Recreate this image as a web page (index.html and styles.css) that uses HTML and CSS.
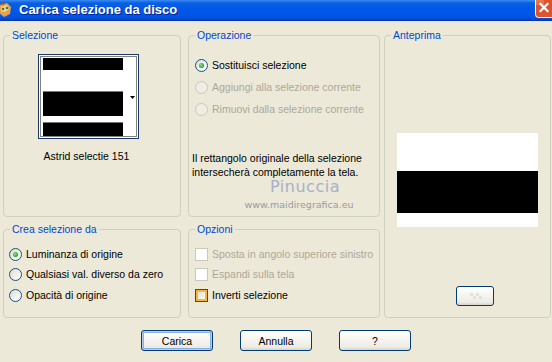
FILE: index.html
```html
<!DOCTYPE html>
<html lang="it">
<head>
    <meta charset="UTF-8">
    <title>Carica selezione da disco</title>
    <link rel="stylesheet" href="styles.css">
</head>
<body>
    <div class="window">
        <div class="titlebar">
            <svg class="app-icon" width="16" height="18" viewBox="0 0 16 18">
                <path d="M2 4 L9 2 L13 6 L12 13 L6 16 L1 12 Z" fill="#e8a24a"/>
                <path d="M3 6 L9 4 L11 8 L7 11 L3 10 Z" fill="#f7d39a"/>
                <circle cx="5" cy="8" r="1.3" fill="#2f8a2f"/>
                <circle cx="9" cy="7" r="1.3" fill="#2f8a2f"/>
                <path d="M1 3 L5 1 L6 4 Z" fill="#c24a1a"/>
            </svg>
            <span class="title">Carica selezione da disco</span>
            <svg class="close-btn" width="17" height="19" viewBox="0 0 17 19">
                <rect x="0.5" y="-4" width="22" height="21.5" rx="3" fill="#dd532d" stroke="#ffffff" stroke-width="1"/>
                <rect x="1" y="-3" width="8" height="8" fill="#ec8a66" opacity="0.6"/>
                <path d="M5.5 4 L12.5 11 M12.5 4 L5.5 11" stroke="#ffffff" stroke-width="2.2" stroke-linecap="square"/>
            </svg>
        </div>

        <div class="content">
            <div class="panels">
                <fieldset class="group group-sel">
                    <legend>Selezione</legend>
                    <div class="thumb-col">
                        <div class="thumb">
                            <svg width="99" height="83" viewBox="0 0 99 83">
                                <rect x="0" y="0" width="99" height="83" fill="#fff"/>
                                <rect x="4" y="3" width="80" height="12" fill="#000"/>
                                <rect x="4" y="36" width="80" height="1" fill="#777"/>
                                <rect x="4" y="37" width="80" height="24" fill="#000"/>
                                <rect x="4" y="67" width="80" height="1" fill="#777"/>
                                <rect x="4" y="68" width="80" height="13" fill="#000"/>
                                <rect x="1.5" y="1.5" width="96" height="80" fill="none" stroke="#000" stroke-width="1" stroke-dasharray="1 1"/>
                                <path d="M91 41 L96 41 L93.5 44 Z" fill="#000"/>
                            </svg>
                        </div>
                        <div class="caption">Astrid selectie 151</div>
                    </div>
                </fieldset>

                <fieldset class="group group-op">
                    <legend>Operazione</legend>
                    <div class="options">
                        <label class="opt"><span class="radio checked"></span>Sostituisci selezione</label>
                        <label class="opt disabled"><span class="radio"></span>Aggiungi alla selezione corrente</label>
                        <label class="opt disabled"><span class="radio"></span>Rimuovi dalla selezione corrente</label>
                    </div>
                    <p class="info">Il rettangolo originale della selezione intersecherà completamente la tela.</p>
                    <div class="watermark">
                        <span class="wm-name">Pinuccia</span>
                        <span class="wm-url">www.maidiregrafica.eu</span>
                    </div>
                </fieldset>

                <fieldset class="group group-prev">
                    <legend>Anteprima</legend>
                    <div class="preview">
                        <div class="band white top"></div>
                        <div class="band black"></div>
                        <div class="band white bottom"></div>
                    </div>
                    <button class="btn btn-small">
                        <svg width="14" height="10" viewBox="0 0 14 10">
                            <rect x="2" y="2" width="3" height="3" fill="#e4e2da"/>
                            <rect x="8" y="2" width="3" height="3" fill="#e4e2da"/>
                            <rect x="5" y="5" width="3" height="3" fill="#e4e2da"/>
                            <rect x="11" y="5" width="3" height="3" fill="#e4e2da"/>
                        </svg>
                    </button>
                </fieldset>

                <fieldset class="group group-crea">
                    <legend>Crea selezione da</legend>
                    <div class="options">
                        <label class="opt"><span class="radio checked"></span>Luminanza di origine</label>
                        <label class="opt"><span class="radio"></span>Qualsiasi val. diverso da zero</label>
                        <label class="opt"><span class="radio"></span>Opacità di origine</label>
                    </div>
                </fieldset>

                <fieldset class="group group-opz">
                    <legend>Opzioni</legend>
                    <div class="options">
                        <label class="opt disabled"><span class="check"></span>Sposta in angolo superiore sinistro</label>
                        <label class="opt disabled"><span class="check"></span>Espandi sulla tela</label>
                        <label class="opt"><span class="check hover"></span>Inverti selezione</label>
                    </div>
                </fieldset>
            </div>

            <div class="buttons">
                <button class="btn btn-default">Carica</button>
                <button class="btn">Annulla</button>
                <button class="btn">?</button>
            </div>
        </div>
    </div>
</body>
</html>
```

FILE: styles.css
```css
* { margin: 0; padding: 0; box-sizing: border-box; }
body {
    font-family: "Liberation Sans", Arial, sans-serif;
    font-size: 10.5px;
    color: #000;
    background: #ECE9D8;
}
.window {
    width: 552px;
    height: 362px;
    background: #ECE9D8;
    overflow: hidden;
}
.titlebar {
    height: 21px;
    display: flex;
    align-items: flex-start;
    background: linear-gradient(#3a8cf4 0%, #0a5fe0 15%, #0058ea 45%, #0055e2 85%, #0040c8 100%);
    border-bottom: 1px solid #0036b0;
}
.app-icon {
    margin: 1px 0 0 -2px;
    flex-shrink: 0;
}
.title {
    margin-left: 5px;
    font-size: 13px;
    font-weight: bold;
    line-height: 20px;
    color: #fff;
    text-shadow: 1px 1px 0 #0a1f8a;
}
.close-btn {
    display: block;
    flex-shrink: 0;
    margin-left: auto;
}
.content {
    padding: 8px 0 0 3px;
}
.panels {
    display: grid;
    grid-template-columns: 178px 7px 192px 4px 167px;
    grid-template-rows: 188px 95px;
    row-gap: 6px;
}
.group {
    border: 1px solid #D0D0BF;
    border-radius: 4px;
    padding: 0 6px;
    min-width: 0;
    position: relative;
}
.group legend {
    padding: 0 2px;
    font-size: 10.5px;
    line-height: 13px;
    color: #0046D5;
}
.group-sel { grid-column: 1; grid-row: 1; }
.group-op { grid-column: 3; grid-row: 1; }
.group-prev {
    grid-column: 5;
    grid-row: 1 / 3;
    display: flex;
    flex-direction: column;
    align-items: center;
}
.group-crea { grid-column: 1; grid-row: 2; }
.group-opz { grid-column: 3; grid-row: 2; }

.thumb-col {
    width: 101px;
    margin: 12px 0 0 28px;
    display: flex;
    flex-direction: column;
    align-items: center;
}
.thumb {
    width: 101px;
    height: 85px;
    border: 1px solid #1c3a6e;
    background: #fff;
}
.thumb svg { display: block; }
.caption {
    margin-top: 11px;
    line-height: 13px;
    margin-left: -4px;
}

.options {
    display: flex;
    flex-direction: column;
}
.group-op .options { margin-top: 12px; }
.group-crea .options,
.group-opz .options { margin-top: 8px; }
.opt {
    height: 22px;
    display: flex;
    align-items: center;
    gap: 4px;
    line-height: 13px;
    white-space: nowrap;
}
.group-crea .opt,
.group-opz .opt { height: 20.5px; }
.group-crea .opt { margin-left: -1px; }
.opt.disabled { color: #ACA899; }

.radio {
    width: 13px;
    height: 13px;
    flex-shrink: 0;
    border-radius: 50%;
    border: 1px solid #1C5180;
    background: linear-gradient(135deg, #dcdad0 0%, #f4f3ee 60%, #fff 100%);
    display: flex;
    align-items: center;
    justify-content: center;
}
.radio.checked::after {
    content: "";
    width: 5px;
    height: 5px;
    border-radius: 50%;
    background: radial-gradient(circle at 40% 40%, #8ee28e, #21a121 70%);
}
.disabled .radio {
    border-color: #CAC8BB;
    background: #F0EEE4;
}
.check {
    width: 13px;
    height: 13px;
    flex-shrink: 0;
    border: 1px solid #1C5180;
    background: linear-gradient(135deg, #dcdad0 0%, #f6f5f0 70%, #fff 100%);
}
.disabled .check {
    border-color: #CAC8BB;
    background: #fff;
}
.check.hover {
    box-shadow: inset 0 0 0 2px #F8B636;
}

.info {
    margin: 31px 0 0 -3px;
    line-height: 14px;
    width: 180px;
}
.watermark {
    position: absolute;
    left: 40px;
    top: 137px;
    width: 140px;
    display: flex;
    flex-direction: column;
    align-items: center;
    font-family: "DejaVu Sans", sans-serif;
}
.wm-name {
    font-size: 16px;
    line-height: 16px;
    letter-spacing: 0.5px;
    color: #a8b0c8;
    margin-left: 12px;
}
.wm-url {
    margin-top: 5px;
    font-size: 9.5px;
    line-height: 10px;
    color: #979ba6;
}

.preview {
    margin-top: 91px;
    width: 141px;
    display: flex;
    flex-direction: column;
}
.band.white { background: #fff; }
.band.black { background: #000; height: 42px; }
.band.top { height: 38px; }
.band.bottom { height: 14px; }

.buttons {
    margin-top: 12px;
    display: flex;
    justify-content: center;
    gap: 27px;
    padding-right: 3px;
}
.btn {
    width: 72px;
    height: 21px;
    font-family: "Liberation Sans", Arial, sans-serif;
    font-size: 10.5px;
    color: #000;
    border: 1px solid #003C74;
    border-radius: 3px;
    background: linear-gradient(#ffffff 0%, #f7f6f2 40%, #ecebe5 85%, #d8d3c8 100%);
}
.btn-default {
    box-shadow: inset 0 0 0 1px #b7cdf0, inset 0 0 0 2px #89aee6;
}
.btn-small {
    margin-top: 59px;
    margin-left: 14px;
    width: 38px;
    height: 20px;
    display: flex;
    align-items: center;
    justify-content: center;
}
```
